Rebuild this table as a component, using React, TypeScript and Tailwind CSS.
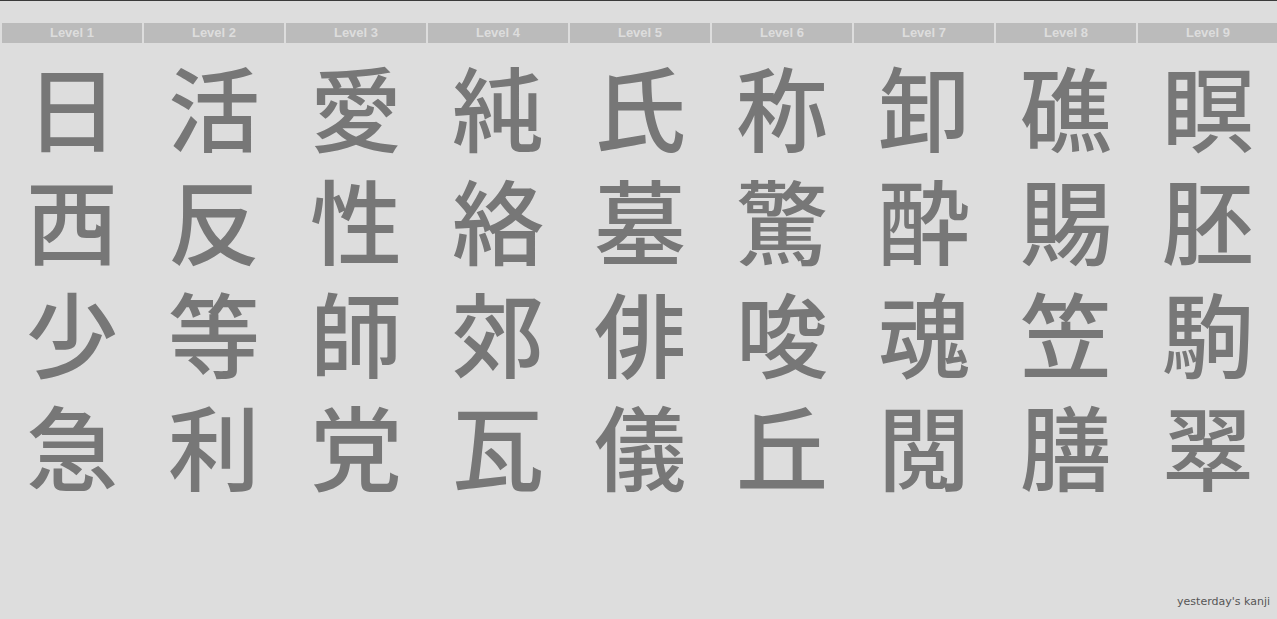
import React from "react";

const levels = ["Level 1", "Level 2", "Level 3", "Level 4", "Level 5", "Level 6", "Level 7", "Level 8", "Level 9"];

// one row per line of the board, one kanji per level
const rows: string[][] = [
  ["日", "活", "愛", "純", "氏", "称", "卸", "礁", "瞑"],
  ["西", "反", "性", "絡", "墓", "驚", "酔", "賜", "胚"],
  ["少", "等", "師", "郊", "俳", "唆", "魂", "笠", "駒"],
  ["急", "利", "党", "瓦", "儀", "丘", "閲", "膳", "翠"],
];

const App = () => {
  return (
    <div className="relative h-screen w-screen overflow-hidden border-t border-[#3a3a3a] bg-[#dddddd]">
      <div className="grid w-[1278px] grid-cols-[repeat(9,140px)] gap-x-[2px] pl-[2px] pt-[22px]">
        {levels.map((level) => (
          <div
            key={level}
            className="flex h-[20px] items-center justify-center bg-[#bbbbbb] text-[13px] font-bold text-[#dddddd] [font-family:'Liberation_Sans',Arial,sans-serif]"
          >
            {level}
          </div>
        ))}
      </div>

      <div className="grid w-[1278px] grid-cols-[repeat(9,140px)] gap-x-[2px] pl-[2px] pt-[5px]">
        {rows.map((row, i) =>
          row.map((kanji) => (
            <div
              key={`${i}-${kanji}`}
              className="text-center text-[92px] font-medium leading-[113px] text-[#777777] [font-family:'Noto_Sans_CJK_JP',sans-serif]"
            >
              {kanji}
            </div>
          ))
        )}
      </div>

      <div className="absolute bottom-[9px] right-[7px] text-[11px] text-[#555555] [font-family:'DejaVu_Sans',sans-serif]">
        yesterday's kanji
      </div>
    </div>
  );
};

export default App;
